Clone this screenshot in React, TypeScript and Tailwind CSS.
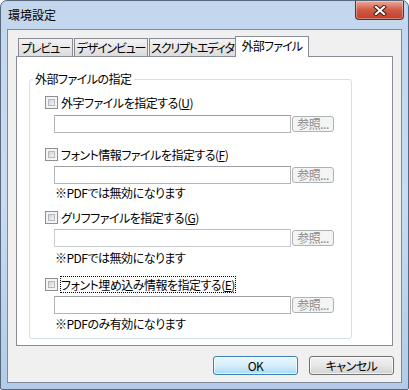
import type { ReactNode } from "react";

const FONT = "font-['Noto_Sans_CJK_JP','Noto_Sans',sans-serif] [font-feature-settings:'palt']";

function Mnemonic({ children }: { children: ReactNode }) {
  return <span className="underline underline-offset-[1px]">{children}</span>;
}

function CheckBox() {
  return (
    <span className="block h-[13px] w-[13px] shrink-0 border border-[#8e8f8f] bg-[#f4f4f4] p-[2px]">
      <span className="block h-full w-full border border-[#b5b9be] bg-gradient-to-br from-[#cfd3d8] to-[#f4f5f6]" />
    </span>
  );
}

function BrowseButton() {
  return (
    <button
      type="button"
      disabled
      className="flex h-[16px] w-[42px] items-center justify-center rounded-[3px] border border-[#adb2b5] bg-[#f4f4f4] text-[12px] font-normal leading-none tracking-[-0.5px] text-[#8b8b8b]"
    >
      参照...
    </button>
  );
}

function FileRow({ disabled, className }: { disabled?: boolean; className: string }) {
  return (
    <div className={`ml-[24px] flex items-center gap-[1px] ${className}`}>
      <div
        className={`h-[18px] w-[237px] border bg-white ${
          disabled ? "border-[#c9cdd2] border-t-[#b9bdc2]" : "border-[#b3b5ba] border-t-[#9da0a6]"
        }`}
      />
      <BrowseButton />
    </div>
  );
}

function Note({ text, className }: { text: string; className: string }) {
  return <p className={`ml-[25px] h-[16px] whitespace-nowrap text-[12px] leading-[16px] ${className}`}>{text}</p>;
}

function CheckRow({ children, className, focused }: { children: ReactNode; className: string; focused?: boolean }) {
  return (
    <label className={`ml-[15px] flex h-[16px] items-center gap-[3px] ${className}`}>
      <CheckBox />
      <span
        className={`whitespace-nowrap text-[12px] leading-[15px] ${focused ? "outline outline-1 outline-dotted outline-black" : ""}`}
      >
        {children}
      </span>
    </label>
  );
}

const tabs = [
  { label: "プレビュー", w: "w-[55px]" },
  { label: "デザインビュー", w: "w-[74px]" },
  { label: "スクリプトエディタ", w: "w-[87px]" },
];

export default function App() {
  return (
    <div className={`h-[390px] w-[409px] bg-white text-black tracking-[-0.5px] ${FONT}`}>
      <div className="flex h-[390px] w-[409px] flex-col rounded-t-[7px] rounded-b-[2px] border border-[#58687c] bg-gradient-to-b from-[#c2d6ee] via-[#c9dcf1] to-[#b3cbe8]">
        {/* title bar */}
        <div className="flex h-[28px] items-start">
          <span className="pl-[7px] pt-[6px] text-[12px] leading-[16px] tracking-normal text-black">環境設定</span>
          <button
            type="button"
            aria-label="閉じる"
            className="ml-auto mr-[4px] flex h-[19px] w-[49px] items-center justify-center rounded-b-[4px] border border-t-0 border-[#6e2a22] bg-gradient-to-b from-[#e9a99a] via-[#cf5a45] to-[#c0412b] shadow-[inset_0_0_0_1px_rgba(255,255,255,0.35)]"
          >
            <svg width="14" height="11" viewBox="0 0 14 11">
              <path d="M3 2 L11 9 M11 2 L3 9" stroke="#3b1410" strokeWidth="4" strokeLinecap="square" />
              <path d="M3 2 L11 9 M11 2 L3 9" stroke="#ffffff" strokeWidth="2.2" strokeLinecap="square" />
            </svg>
          </button>
        </div>

        {/* client area */}
        <div className="mx-[6px] flex h-[354px] flex-col border border-[#7f8b9a] bg-[#f0f0f0]">
          <div className="mt-[6px] flex h-[20px] items-end px-[8px]">
            <div className="flex items-end gap-[1px] pl-[2px]">
              {tabs.map((t) => (
                <div
                  key={t.label}
                  className={`flex h-[18px] ${t.w} items-center justify-center overflow-hidden whitespace-nowrap border border-b-0 border-[#898c95] bg-gradient-to-b from-[#f3f3f3] to-[#dcdcdc] text-[12px] leading-none tracking-[-1.2px]`}
                >
                  {t.label}
                </div>
              ))}
              <div className="relative z-10 -mb-px -ml-[2px] flex h-[21px] w-[74px] items-center justify-center whitespace-nowrap border border-b-0 border-[#898c95] bg-white pb-[2px] text-[12px] leading-none tracking-[-0.8px]">
                外部ファイル
              </div>
            </div>
          </div>

          <div className="mx-[8px] h-[290px] border border-[#898c95] bg-white">
            <div className="relative ml-[12px] mt-[22px] flex h-[260px] w-[323px] flex-col rounded-[3px] border border-[#d5dfe5]">
              <span className="absolute -top-[9px] left-[3px] whitespace-nowrap bg-white px-[2px] text-[12px] leading-[16px]">
                外部ファイルの指定
              </span>

              <CheckRow className="mt-[14px]">
                外字ファイルを指定する(<Mnemonic>U</Mnemonic>)
              </CheckRow>
              <FileRow className="mt-[5px]" />

              <CheckRow className="mt-[13px]">
                フォント情報ファイルを指定する(<Mnemonic>F</Mnemonic>)
              </CheckRow>
              <FileRow className="mt-[4px]" />
              <Note className="mt-[1px]" text="※PDFでは無効になります" />

              <CheckRow className="mt-[8px]">
                グリフファイルを指定する(<Mnemonic>G</Mnemonic>)
              </CheckRow>
              <FileRow disabled className="mt-[4px]" />
              <Note className="mt-[3px]" text="※PDFでは無効になります" />

              <CheckRow focused className="mt-[10px]">
                フォント埋め込み情報を指定する(<Mnemonic>E</Mnemonic>)
              </CheckRow>
              <FileRow className="mt-[4px]" />
              <Note className="mt-[2px]" text="※PDFのみ有効になります" />
            </div>
          </div>

          <div className="mt-[10px] flex justify-end gap-[11px] pr-[7px]">
            <button
              type="button"
              className="h-[19px] w-[85px] rounded-[3px] border border-[#3c7fb1] bg-gradient-to-b from-[#eaf6fd] via-[#d7effc] to-[#a7d9f5] text-[12px] font-normal leading-none shadow-[inset_0_0_0_1px_rgba(255,255,255,0.7)]"
            >
              OK
            </button>
            <button
              type="button"
              className="h-[19px] w-[85px] rounded-[3px] border border-[#707070] bg-gradient-to-b from-[#f2f2f2] via-[#e6e6e6] to-[#d2d2d2] text-[12px] font-normal leading-none shadow-[inset_0_0_0_1px_rgba(255,255,255,0.7)]"
            >
              キャンセル
            </button>
          </div>
        </div>
      </div>
    </div>
  );
}
